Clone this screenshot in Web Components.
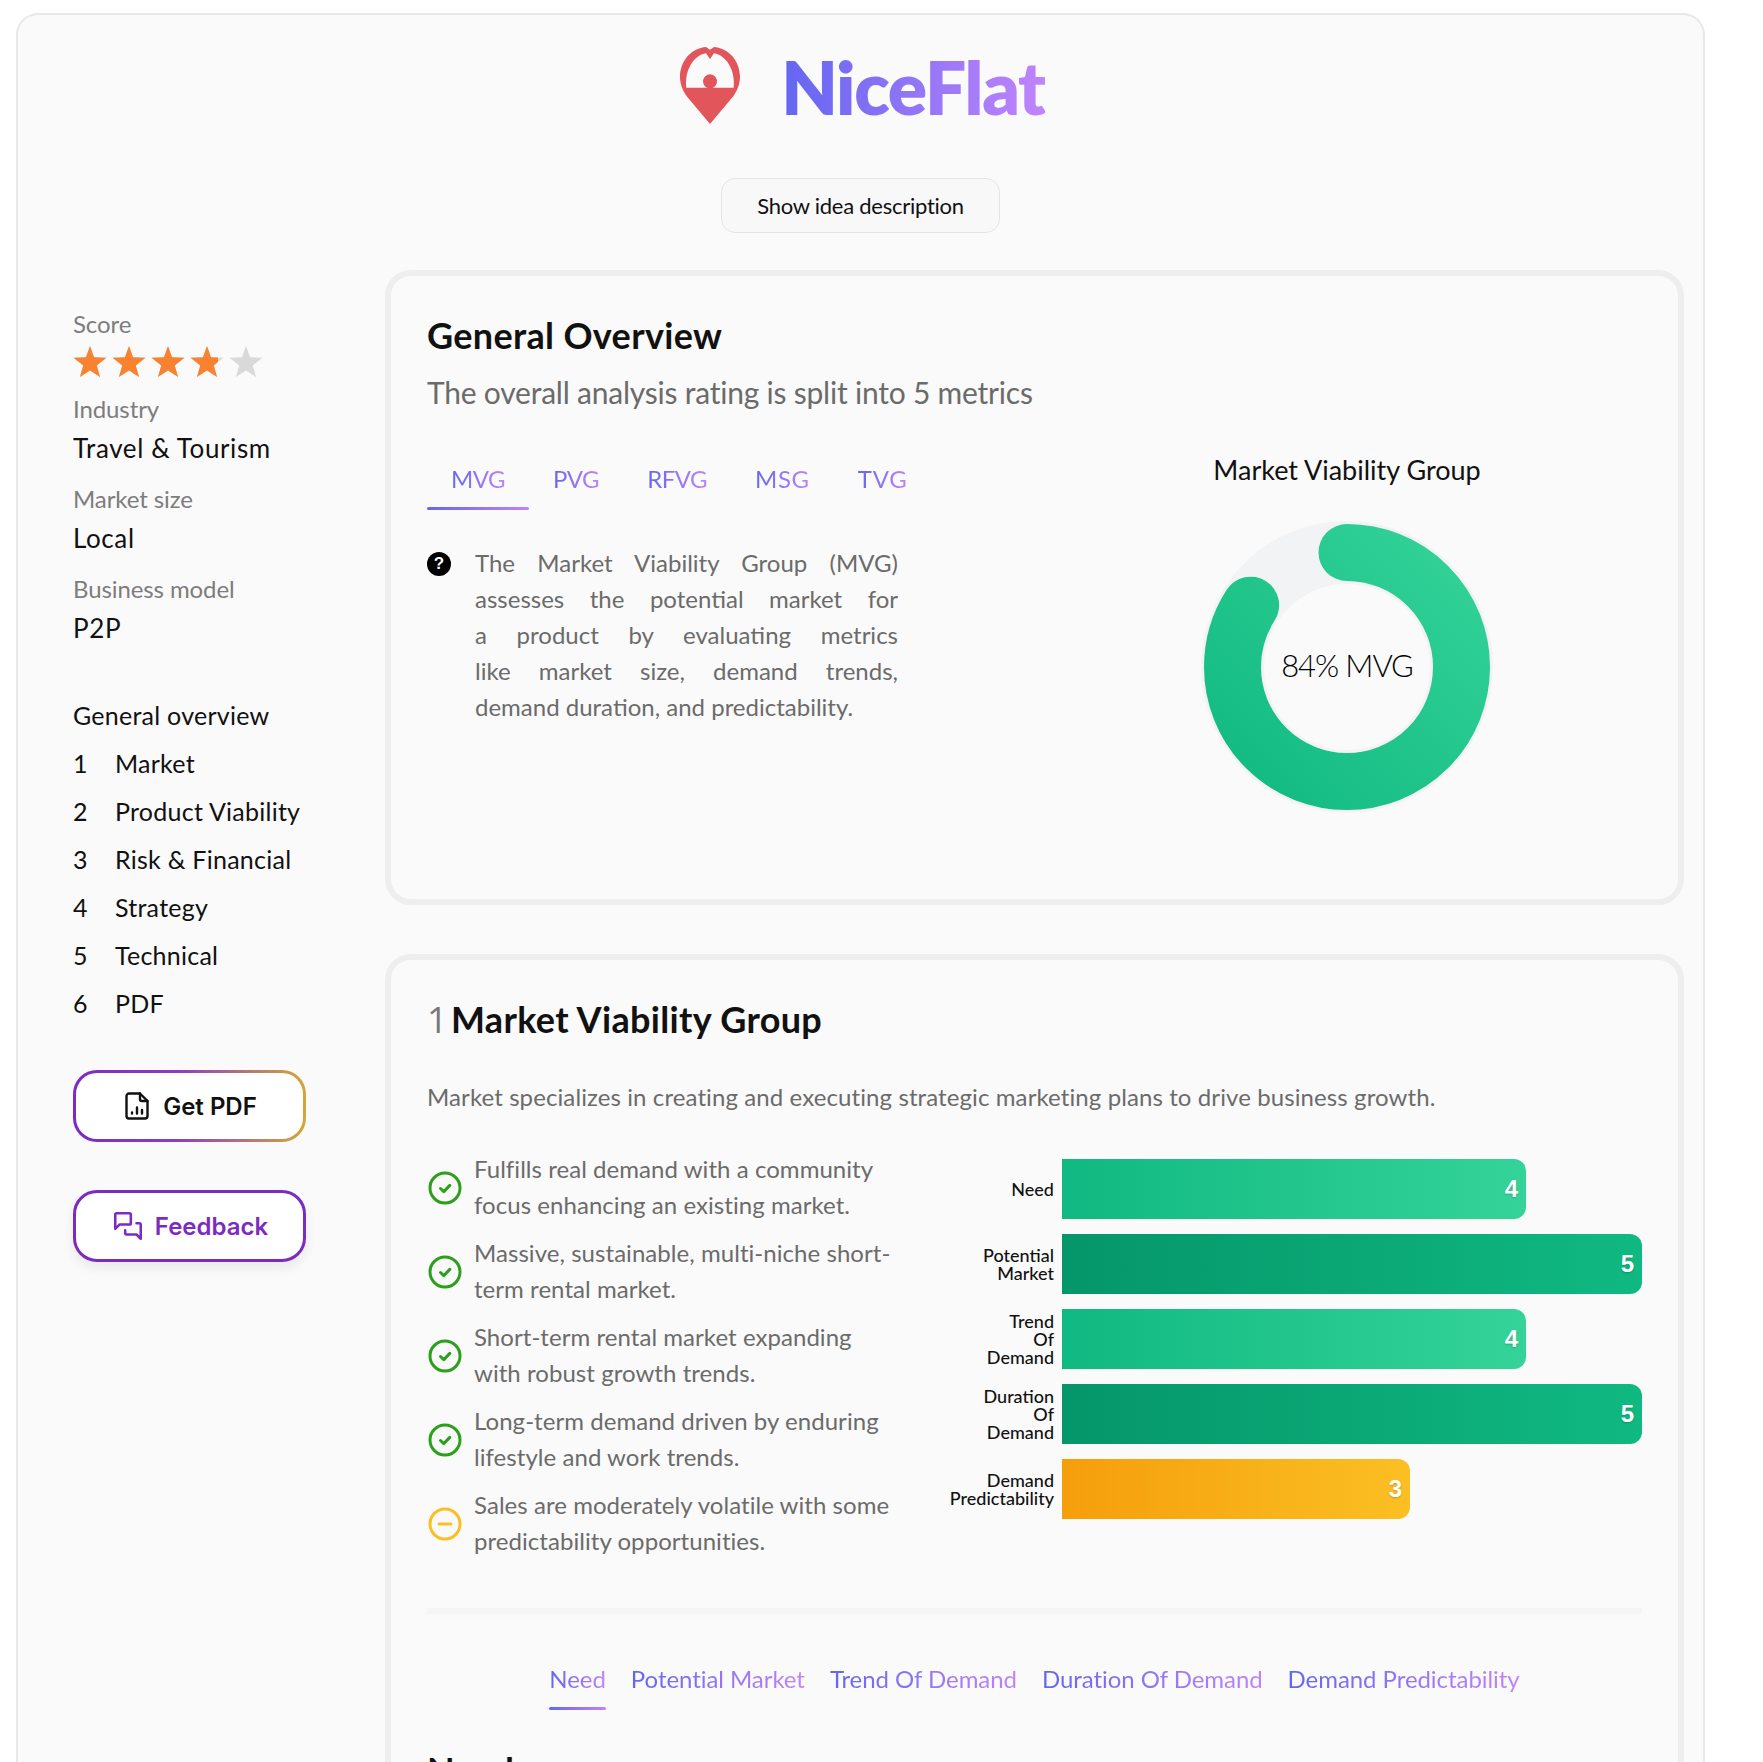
<!DOCTYPE html>
<html>
<head>
<meta charset="utf-8">
<title>NiceFlat</title>
<style>
    html, body { margin: 0; height: 1762px; overflow: hidden; background: #fff; }
    body { font-family: Lato, "Open Sans", sans-serif; color: #111; }
</style>
</head>
<body>
<nf-page>
    <nf-header slot="header"></nf-header>
    <nf-sidebar slot="side"></nf-sidebar>

    <nf-panel>
        <nf-heading>General Overview</nf-heading>
        <nf-overview></nf-overview>
    </nf-panel>

    <nf-panel>
        <nf-heading num="1">Market Viability Group</nf-heading>
        <nf-lead>Market specializes in creating and executing strategic marketing plans to drive business growth.</nf-lead>
        <nf-split>
            <div slot="left">
                <nf-point>Fulfills real demand with a community focus enhancing an existing market.</nf-point>
                <nf-point>Massive, sustainable, multi-niche short-term rental market.</nf-point>
                <nf-point>Short-term rental market expanding with robust growth trends.</nf-point>
                <nf-point>Long-term demand driven by enduring lifestyle and work trends.</nf-point>
                <nf-point kind="warn">Sales are moderately volatile with some predictability opportunities.</nf-point>
            </div>
            <nf-bars slot="right">
                <nf-bar value="4" tone="good">Need</nf-bar>
                <nf-bar value="5" tone="best">Potential<br>Market</nf-bar>
                <nf-bar value="4" tone="good">Trend<br>Of<br>Demand</nf-bar>
                <nf-bar value="5" tone="best">Duration<br>Of<br>Demand</nf-bar>
                <nf-bar value="3" tone="mid">Demand<br>Predictability</nf-bar>
            </nf-bars>
        </nf-split>
        <nf-rule></nf-rule>
        <nf-tabs items="Need|Potential Market|Trend Of Demand|Duration Of Demand|Demand Predictability" pad="0" gap="25" spacing="-0.06" center></nf-tabs>
        <nf-heading style="margin-top:38px">Need</nf-heading>
    </nf-panel>
</nf-page>

<script>
class NfPage extends HTMLElement {
    constructor() {
        super();
        this.attachShadow({ mode: 'open' });
    }

    connectedCallback() {
        this.shadowRoot.innerHTML = `
            <style>
                :host { display: block; padding: 13px 58px 0 16px; }
                .frame {
                    border: 2px solid #e8e8e8;
                    border-bottom: 0;
                    border-radius: 22px 22px 0 0;
                    background: #fafafa;
                    height: 2000px;
                    box-sizing: border-box;
                    padding: 32px 19px 0 55px;
                }
                .main { display: flex; margin-top: 37px; }
                .side { width: 312px; flex: none; }
                .col { flex: 1; display: flex; flex-direction: column; gap: 49px; min-width: 0; }
            </style>
            <div class="frame">
                <slot name="header"></slot>
                <div class="main">
                    <div class="side"><slot name="side"></slot></div>
                    <div class="col"><slot></slot></div>
                </div>
            </div>
        `;
    }
}

class NfHeader extends HTMLElement {
    constructor() {
        super();
        this.attachShadow({ mode: 'open' });
    }

    connectedCallback() {
        this.shadowRoot.innerHTML = `
            <style>
                :host { display: flex; flex-direction: column; align-items: center; margin-left: -36px; }
                .logo { display: flex; align-items: center; gap: 41px; height: 77px; margin-left: 4px; }
                .logo svg { width: 60px; height: 77px; display: block; }
                .name {
                    font-size: 73px;
                    font-weight: 800;
                    line-height: 77px;
                    letter-spacing: -1.3px;
                    margin-top: 4px;
                    background: linear-gradient(90deg, #6366f1, #c084fc);
                    -webkit-background-clip: text;
                    background-clip: text;
                    color: transparent;
                }
                button {
                    margin-top: 54px;
                    width: 279px;
                    height: 55px;
                    border: 1.5px solid #e4e5e9;
                    border-radius: 14px;
                    background: #f8f8f9;
                    font: 400 22px Lato, sans-serif;
                    letter-spacing: -0.25px;
                    color: #111;
                }
            </style>
            <div class="logo">
                <svg viewBox="0 0 180 231">
                    <path fill="#e2565b" fill-rule="evenodd" d="M90 231 L22 150 C8 132 0 110 0 90 C0 40 36 3 78 0 L90 8 L102 0 C144 3 180 40 180 90 C180 110 172 132 158 150 Z M19 122 C13 70 42 24 78 19 L90 36 L102 19 C138 24 167 70 161 122 L99 122 A21 21 0 1 0 81 122 Z"/>
                </svg>
                <div class="name">NiceFlat</div>
            </div>
            <button type="button">Show idea description</button>
        `;
    }
}

class NfSidebar extends HTMLElement {
    constructor() {
        super();
        this.attachShadow({ mode: 'open' });
    }

    connectedCallback() {
        const star = '<svg viewBox="0 0 34 32"><path d="M17 0 L21.2 11.6 L34 12.2 L24 20 L27.4 32 L17 25.2 L6.6 32 L10 20 L0 12.2 L12.8 11.6 Z"/></svg>';
        const stars = star.repeat(5);
        const nav = ['Market', 'Product Viability', 'Risk & Financial', 'Strategy', 'Technical', 'PDF'];
        this.shadowRoot.innerHTML = `
            <style>
                :host { display: block; padding-top: 39px; }
                .label { font-size: 24px; line-height: 30px; color: #7d7d7d; letter-spacing: -0.1px; }
                .value { font-size: 26px; line-height: 36px; margin: 6px 0 18px; color: #111; letter-spacing: 0.6px; }
                .stars { position: relative; height: 31px; width: 190px; margin: 7px 0 17px; }
                .row { display: flex; gap: 5px; width: 190px; }
                .row svg { width: 34px; height: 31px; flex: none; }
                .off svg { fill: #d9d9d9; }
                .on { position: absolute; left: 0; top: 0; width: 145px; overflow: hidden; }
                .on svg { fill: #f98231; }
                nav { margin-top: 45px; font-size: 25px; line-height: 48px; letter-spacing: 0.25px; }
                nav div { display: flex; }
                nav span { width: 42px; }
                .btn {
                    display: flex;
                    align-items: center;
                    justify-content: center;
                    width: 233px;
                    height: 72px;
                    box-sizing: border-box;
                    border-radius: 24px;
                    border: 3px solid transparent;
                    font: 600 24px Inter, sans-serif;
                }
                .btn svg { display: block; }
                .pdf {
                    margin-top: 43px;
                    gap: 14px;
                    padding-left: 3px;
                    background: linear-gradient(#fff, #fff) padding-box, linear-gradient(90deg, #7b2cbf 0%, #8f3dbd 45%, #d4a73a 100%) border-box;
                    color: #111;
                }
                .fb {
                    margin-top: 48px;
                    gap: 10px;
                    background: #fff;
                    border-color: #7b2cbf;
                    color: #7b2cbf;
                    box-shadow: 0 6px 12px rgba(0,0,0,0.07);
                }
            </style>
            <div class="label">Score</div>
            <div class="stars">
                <div class="row off">${stars}</div>
                <div class="on"><div class="row">${stars}</div></div>
            </div>
            <div class="label">Industry</div>
            <div class="value">Travel &amp; Tourism</div>
            <div class="label">Market size</div>
            <div class="value">Local</div>
            <div class="label">Business model</div>
            <div class="value">P2P</div>
            <nav>
                <div>General overview</div>
                ${nav.map((n, i) => `<div><span>${i + 1}</span>${n.replace('&', '&amp;')}</div>`).join('')}
            </nav>
            <div class="btn pdf">
                <svg width="24" height="28" viewBox="0 0 24 28" fill="none" stroke="#111" stroke-width="2.4" stroke-linecap="round" stroke-linejoin="round">
                    <path d="M15 1.5 H4 A2.5 2.5 0 0 0 1.5 4 V24 A2.5 2.5 0 0 0 4 26.5 H20 A2.5 2.5 0 0 0 22.5 24 V9 Z"/>
                    <path d="M15 1.5 V7 A2 2 0 0 0 17 9 H22.5"/>
                    <path d="M7 21.5 V20.5 M12 21.5 V15.5 M17 21.5 V18"/>
                </svg>
                <span>Get PDF</span>
            </div>
            <div class="btn fb">
                <svg width="34" height="34" viewBox="0 0 24 24" fill="none" stroke="#7b2cbf" stroke-width="1.8" stroke-linecap="round" stroke-linejoin="round">
                    <g transform="translate(24 0) scale(-1 1)">
                        <path d="M21 14l-3 -3h-7a1 1 0 0 1 -1 -1v-6a1 1 0 0 1 1 -1h9a1 1 0 0 1 1 1v10"/>
                        <path d="M14 15v2a1 1 0 0 1 -1 1h-7l-3 3v-10a1 1 0 0 1 1 -1h2"/>
                    </g>
                </svg>
                <span>Feedback</span>
            </div>
        `;
    }
}

class NfPanel extends HTMLElement {
    constructor() {
        super();
        this.attachShadow({ mode: 'open' });
    }

    connectedCallback() {
        this.shadowRoot.innerHTML = `
            <style>
                :host {
                    display: block;
                    border: 6px solid #eeeeee;
                    border-radius: 26px;
                    padding: 37px 36px 86px;
                    background: #fafafa;
                }
            </style>
            <slot></slot>
        `;
    }
}

class NfHeading extends HTMLElement {
    constructor() {
        super();
        this.attachShadow({ mode: 'open' });
    }

    connectedCallback() {
        const num = this.getAttribute('num');
        this.shadowRoot.innerHTML = `
            <style>
                :host { display: block; font-size: 36px; line-height: 44px; font-weight: 700; color: #111; letter-spacing: 0.33px; }
                .num { font-family: "Open Sans", sans-serif; font-weight: 400; color: #777; margin-right: 3px; }
            </style>
            ${num ? `<span class="num">${num}</span>` : ''}<slot></slot>
        `;
    }
}

class NfLead extends HTMLElement {
    constructor() {
        super();
        this.attachShadow({ mode: 'open' });
    }

    connectedCallback() {
        this.shadowRoot.innerHTML = `
            <style>
                :host { display: block; margin-top: 37px; font-size: 24px; line-height: 36px; color: #6b6b6b; letter-spacing: 0.1px; }
            </style>
            <slot></slot>
        `;
    }
}

class NfTabs extends HTMLElement {
    constructor() {
        super();
        this.attachShadow({ mode: 'open' });
    }

    connectedCallback() {
        const items = this.getAttribute('items').split('|');
        const pad = this.getAttribute('pad') || 0;
        const gap = this.getAttribute('gap') || 0;
        const spacing = (this.getAttribute('spacing') || '0').split(',');
        const center = this.hasAttribute('center');
        this.shadowRoot.innerHTML = `
            <style>
                :host { display: flex; gap: ${gap}px; justify-content: ${center ? 'center' : 'flex-start'}; }
                .tab { padding: 0 ${pad}px 13px; position: relative; height: 30px; border-bottom: 3px solid transparent; }
                .tab.on::after {
                    content: '';
                    position: absolute;
                    left: 0; right: 0; bottom: -3px;
                    height: 3px;
                    border-radius: 2px;
                    background: linear-gradient(90deg, #6366f1, #c084fc);
                }
                .txt {
                    display: block;
                    font-size: 24px;
                    line-height: 30px;
                    background: linear-gradient(90deg, #6366f1, #c084fc);
                    -webkit-background-clip: text;
                    background-clip: text;
                    color: transparent;
                }
            </style>
            ${items.map((t, i) => `<div class="tab ${i === 0 ? 'on' : ''}"><span class="txt" style="letter-spacing:${spacing[i] || spacing[0]}px">${t}</span></div>`).join('')}
        `;
    }
}

class NfDonut extends HTMLElement {
    constructor() {
        super();
        this.attachShadow({ mode: 'open' });
    }

    connectedCallback() {
        const pct = Number(this.getAttribute('percent'));
        const r = 114.5;
        const len = 2 * Math.PI * r;
        this.shadowRoot.innerHTML = `
            <style>
                :host { display: block; position: relative; width: 292px; height: 292px; }
                svg { display: block; transform: rotate(-90deg); }
                .mid {
                    position: absolute;
                    inset: 0;
                    display: flex;
                    align-items: center;
                    justify-content: center;
                    font-size: 31px;
                    font-weight: 300;
                    letter-spacing: -1.1px;
                    color: #000;
                    margin-top: -5px;
                }
            </style>
            <svg width="292" height="292" viewBox="0 0 292 292" fill="none">
                <defs>
                    <linearGradient id="g" gradientUnits="userSpaceOnUse" x1="20" y1="20" x2="272" y2="272">
                        <stop offset="0" stop-color="#10b981"/>
                        <stop offset="1" stop-color="#34d399"/>
                    </linearGradient>
                </defs>
                <circle cx="146" cy="146" r="${r}" stroke="#f2f3f5" stroke-width="63"/>
                <circle cx="146" cy="146" r="${r}" stroke="url(#g)" stroke-width="57" stroke-linecap="round"
                    stroke-dasharray="${len * pct / 100} ${len}"/>
            </svg>
            <div class="mid"><slot></slot></div>
        `;
    }
}

class NfSplit extends HTMLElement {
    constructor() {
        super();
        this.attachShadow({ mode: 'open' });
    }

    connectedCallback() {
        this.shadowRoot.innerHTML = `
            <style>
                :host { display: flex; justify-content: space-between; margin-top: 37px; }
                .l { width: 471px; flex: none; }
            </style>
            <div class="l"><slot name="left"></slot></div>
            <div class="r"><slot name="right"></slot></div>
        `;
    }
}

class NfOverview extends HTMLElement {
    constructor() {
        super();
        this.attachShadow({ mode: 'open' });
    }

    connectedCallback() {
        this.shadowRoot.innerHTML = `
            <style>
                :host { display: block; }
                .sub { margin-top: 15px; font-size: 30px; line-height: 40px; color: #6b6b6b; letter-spacing: -0.22px; }
                .cols { display: flex; gap: 154px; }
                .l { width: 471px; flex: none; padding-top: 52px; }
                .r { flex: 1; display: flex; flex-direction: column; align-items: center; padding-top: 41px; }
                .t { font-size: 27px; line-height: 34px; margin-bottom: 34px; color: #111; }
                .info { display: flex; gap: 24px; margin-top: 35px; }
                .q {
                    flex: none;
                    width: 24px;
                    height: 24px;
                    margin-top: 7px;
                    border-radius: 50%;
                    background: #000;
                    color: #fff;
                    font: 700 17px/24px "Liberation Sans", sans-serif;
                    text-align: center;
                }
                p { margin: 0; flex: 1; font-size: 24px; line-height: 36px; color: #6b6b6b; }
                p span { display: block; text-align-last: justify; }
                p span:last-child { text-align-last: left; }
            </style>
            <div class="sub">The overall analysis rating is split into 5 metrics</div>
            <div class="cols">
                <div class="l">
                    <nf-tabs items="MVG|PVG|RFVG|MSG|TVG" pad="24" spacing="-0.5,-0.5,-0.5,0.6,0.8"></nf-tabs>
                    <div class="info">
                        <div class="q">?</div>
                        <p><span>The Market Viability Group (MVG)</span><span>assesses the potential market for</span><span>a product by evaluating metrics</span><span>like market size, demand trends,</span><span>demand duration, and predictability.</span></p>
                    </div>
                </div>
                <div class="r">
                    <div class="t">Market Viability Group</div>
                    <nf-donut percent="84">84% MVG</nf-donut>
                </div>
            </div>
        `;
    }
}

class NfPoint extends HTMLElement {
    constructor() {
        super();
        this.attachShadow({ mode: 'open' });
    }

    connectedCallback() {
        const warn = this.getAttribute('kind') === 'warn';
        const color = warn ? '#fbbf24' : '#2ca01c';
        const mark = warn ? 'M11 17 H23' : 'M12.5 17.5 L15.8 20.6 L21.8 14.4';
        this.shadowRoot.innerHTML = `
            <style>
                :host { display: flex; align-items: center; gap: 12px; margin-bottom: 12px; }
                svg { flex: none; display: block; margin-left: 1px; }
                div { font-size: 24px; line-height: 36px; color: #6b6b6b; width: 424px; flex: none; letter-spacing: 0.05px; margin: -1px 0 1px; }
            </style>
            <svg width="34" height="34" viewBox="0 0 34 34" fill="none" stroke="${color}" stroke-width="3" stroke-linecap="round" stroke-linejoin="round">
                <circle cx="17" cy="17" r="15"/>
                <path d="${mark}"/>
            </svg>
            <div><slot></slot></div>
        `;
    }
}

class NfBars extends HTMLElement {
    constructor() {
        super();
        this.attachShadow({ mode: 'open' });
    }

    connectedCallback() {
        this.shadowRoot.innerHTML = `
            <style>
                :host { display: flex; flex-direction: column; gap: 15px; padding-top: 7px; }
            </style>
            <slot></slot>
        `;
    }
}

class NfBar extends HTMLElement {
    constructor() {
        super();
        this.attachShadow({ mode: 'open' });
    }

    connectedCallback() {
        const value = Number(this.getAttribute('value'));
        const tones = {
            best: '#059669, #10b981',
            good: '#10b981, #34d399',
            mid: '#f59e0b, #fbbf24',
        };
        this.shadowRoot.innerHTML = `
            <style>
                :host { display: flex; align-items: center; gap: 8px; height: 60px; }
                .name {
                    width: 120px;
                    text-align: right;
                    font-size: 18px;
                    line-height: 18px;
                    font-weight: 500;
                    color: #111;
                }
                .track { width: 580px; }
                .bar {
                    width: ${value * 116}px;
                    height: 60px;
                    box-sizing: border-box;
                    padding-right: 8px;
                    border-radius: 0 12px 12px 0;
                    background: linear-gradient(90deg, ${tones[this.getAttribute('tone')]});
                    display: flex;
                    align-items: center;
                    justify-content: flex-end;
                    color: #fff;
                    font: 700 24px "Liberation Sans", sans-serif;
                    text-shadow: 0 1px 2px rgba(0,0,0,0.2);
                }
            </style>
            <div class="name"><slot></slot></div>
            <div class="track"><div class="bar">${value}</div></div>
        `;
    }
}

class NfRule extends HTMLElement {
    constructor() {
        super();
        this.attachShadow({ mode: 'open' });
    }

    connectedCallback() {
        this.shadowRoot.innerHTML = `
            <style>
                :host { display: block; height: 6px; background: #f5f5f5; margin: 36px 0 50px; }
            </style>
        `;
    }
}

customElements.define('nf-page', NfPage);
customElements.define('nf-header', NfHeader);
customElements.define('nf-sidebar', NfSidebar);
customElements.define('nf-panel', NfPanel);
customElements.define('nf-heading', NfHeading);
customElements.define('nf-lead', NfLead);
customElements.define('nf-tabs', NfTabs);
customElements.define('nf-donut', NfDonut);
customElements.define('nf-split', NfSplit);
customElements.define('nf-overview', NfOverview);
customElements.define('nf-point', NfPoint);
customElements.define('nf-bars', NfBars);
customElements.define('nf-bar', NfBar);
customElements.define('nf-rule', NfRule);
</script>
</body>
</html>
